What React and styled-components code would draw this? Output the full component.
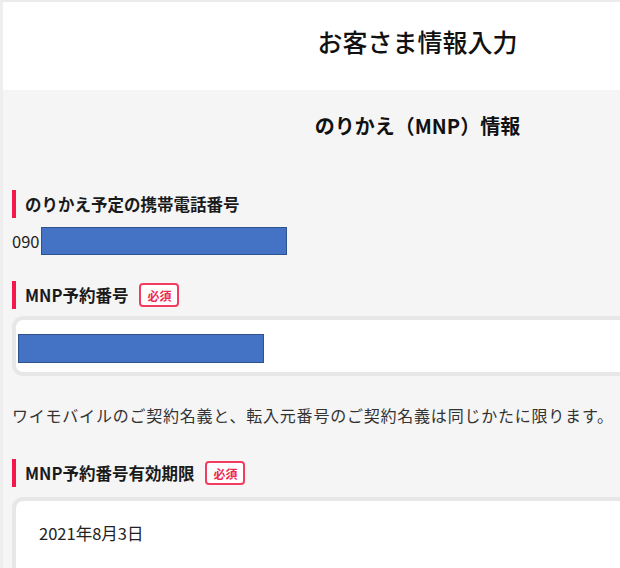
import React from "react";
import styled, { createGlobalStyle } from "styled-components";

const GlobalStyle = createGlobalStyle`
  html, body {
    margin: 0;
    padding: 0;
    background: #f5f5f5;
    overflow: hidden;
  }
  body {
    font-family: "Noto Sans CJK JP", "Noto Sans", sans-serif;
    color: #222;
  }
`;

const Page = styled.div`
  width: 832px;
  border-top: 2px solid #ebebeb;
  border-left: 3px solid #eeeeee;
  box-sizing: border-box;
  min-height: 568px;
  background: #f5f5f5;
`;

const Header = styled.header`
  height: 88px;
  background: #fff;
  display: flex;
  align-items: center;
  justify-content: center;
`;

const Title = styled.h1`
  margin: 0 0 10px;
  font-size: 25px;
  font-weight: 500;
  line-height: 1.2;
  color: #111;
`;

const Main = styled.main`
  padding: 24px 9px 0 9px;
  display: flex;
  flex-direction: column;
`;

const SectionTitle = styled.h2`
  margin: 0;
  text-align: center;
  font-size: 20px;
  font-weight: 700;
  line-height: 24px;
  color: #111;
`;

const Label = styled.div`
  display: flex;
  align-items: center;
  gap: 11px;
  height: 28px;
  margin-top: ${(p) => p.$mt}px;
  border-left: 4px solid #f5184c;
  padding-left: 9px;
  font-size: 16.5px;
  font-weight: 700;
  color: #1a1a1a;
`;

const Badge = styled.span`
  display: inline-flex;
  align-items: center;
  justify-content: center;
  width: 40px;
  height: 24px;
  box-sizing: border-box;
  border: 2px solid #f23d61;
  border-radius: 4px;
  background: #fff;
  color: #ec2a50;
  font-size: 12px;
  font-weight: 700;
`;

const ValueRow = styled.div`
  display: flex;
  align-items: center;
  margin-top: 9px;
  height: 28px;
  font-size: 16.5px;
  color: #222;
`;

const Prefix = styled.span`
  width: 29px;
  white-space: nowrap;
`;

const Redaction = styled.div`
  width: ${(p) => p.$w}px;
  height: ${(p) => p.$h}px;
  background: #4472c4;
  border: 1px solid #2f528f;
  box-sizing: border-box;
`;

const InputBox = styled.div`
  margin-top: ${(p) => p.$mt}px;
  background: #fff;
  border: 4px solid #e7e7e7;
  border-radius: 11px;
  padding: ${(p) => p.$pad};
  box-sizing: border-box;
  height: ${(p) => p.$h}px;
  font-size: 16.5px;
  line-height: 24px;
  color: #222;
`;

const Note = styled.p`
  margin: 27px 0 0;
  font-size: 16px;
  line-height: 24px;
  letter-spacing: 0.78px;
  color: #333;
`;

export default function App() {
  return (
    <>
      <GlobalStyle />
      <Page>
        <Header>
          <Title>お客さま情報入力</Title>
        </Header>
        <Main>
          <SectionTitle>のりかえ（MNP）情報</SectionTitle>

          <Label $mt={52}>のりかえ予定の携帯電話番号</Label>
          <ValueRow>
            <Prefix>090</Prefix>
            <Redaction $w={246} $h={28} />
          </ValueRow>

          <Label $mt={26}>
            MNP予約番号
            <Badge>必須</Badge>
          </Label>
          <InputBox $mt={7} $h={60} $pad="14px 2px 9px">
            <Redaction $w={246} $h={29} />
          </InputBox>

          <Note>
            ワイモバイルのご契約名義と、転入元番号のご契約名義は同じかたに限ります。
          </Note>

          <Label $mt={32}>
            MNP予約番号有効期限
            <Badge>必須</Badge>
          </Label>
          <InputBox $mt={10} $h={80} $pad="20px 23px">
            2021年8月3日
          </InputBox>
        </Main>
      </Page>
    </>
  );
}
